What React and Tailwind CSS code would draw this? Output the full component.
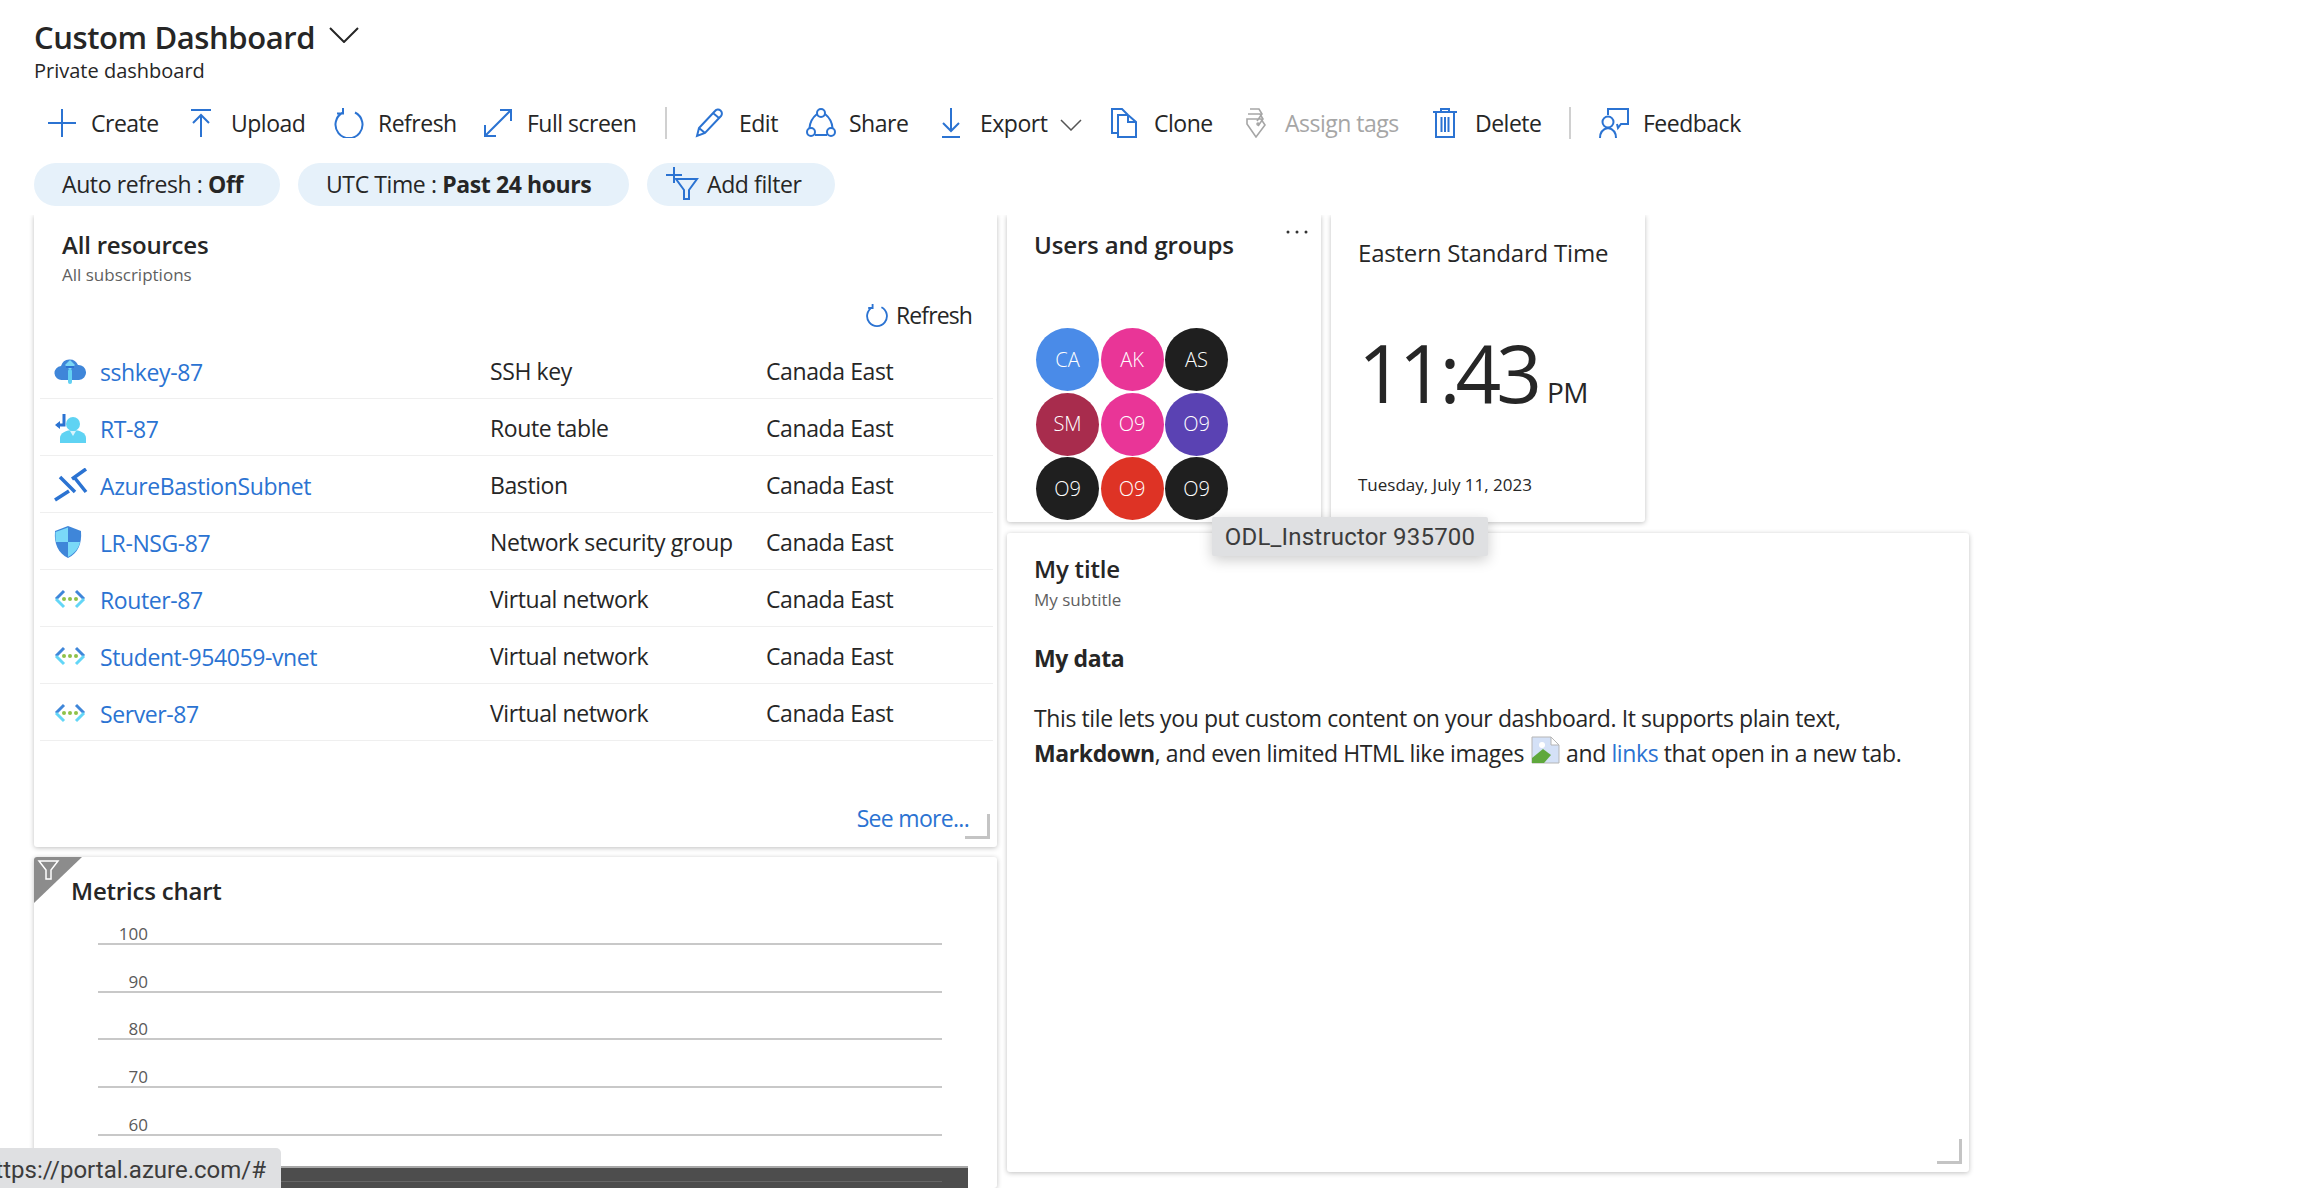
const Ic = ({ children, c = "#2b73d2", w = 30, h = 30, vb = "0 0 30 30", cls = "", sw = 2 }) => (
  <svg width={w} height={h} viewBox={vb} fill="none" stroke={c} strokeWidth={sw} className={`shrink-0 ${cls}`}>{children}</svg>
);

const tools = [
  { t: "Create", cls: "ml-[48px]", tw: "w-[67px]", ig: "w-[43px]", icon: <Ic w={28} h={28} vb="0 0 28 28"><path d="M14 0v28M0 14h28" /></Ic> },
  { t: "Upload", cls: "ml-[32px]", tw: "w-[73px]", ig: "w-[41px]", icon: <Ic w={22} h={30} vb="0 0 22 30"><path d="M1 2h20M11 29V7M3 15l8-8 8 8" /></Ic> },
  { t: "Refresh", cls: "ml-[30px]", tw: "w-[76px]", ig: "w-[44px]", icon: <Ic w={30} h={30}><path d="M9 4.500a13.500 13.500 0 1 0 12 0M9 0v5.500H3" /></Ic> },
  { t: "Full screen", cls: "ml-[29px]", tw: "w-[109px]", ig: "w-[44px]", icon: <Ic w={30} h={30}><path d="M2 28 28 2M17 2h11v11M2 17v11h11" /></Ic> },
  { sep: true, cls: "ml-[29px]" },
  { t: "Edit", cls: "ml-[28px]", tw: "w-[38px]", ig: "w-[44px]", icon: <Ic w={30} h={30}><path d="M2 28l2-8L20 3a3 3 0 0 1 6 5L10 25zM4 20l6 5M18 5l6 5" /></Ic> },
  { t: "Share", cls: "ml-[29px]", tw: "w-[58px]", ig: "w-[43px]", icon: <Ic w={30} h={30}><circle cx="15" cy="5" r="4" /><circle cx="5" cy="24" r="4" /><circle cx="25" cy="24" r="4" /><path d="M11 6C6 10 4 14 3.500 20M19 6c5 4 7 8 7.500 14M9 27h12" /></Ic> },
  { t: "Export", cls: "ml-[34px]", tw: "w-[65px]", ig: "w-[39px]", icon: <Ic w={20} h={30} vb="0 0 20 30"><path d="M10 0v23M2 15l8 8 8-8M1 29h18" /></Ic>, chev: true },
  { t: "Clone", cls: "ml-[66px]", tw: "w-[58px]", ig: "w-[43px]", icon: <Ic w={26} h={30} vb="0 0 26 30"><path d="M7 25H1V1h10l6 6M7 7h10l8 7v15H7zM17 7v7h8" /></Ic> },
  { t: "Assign tags", cls: "ml-[33px]", tw: "w-[117px]", ig: "w-[40px]", gray: true, icon: <Ic c="#a6a6a6" w={22} h={30} vb="0 0 22 30" sw={1.6}><path d="M5 1h9l3 5-5 7M3 6h12l3 5-5 7M2 11h14l4 6-9 12-9-13z" /><circle cx="13" cy="16" r="1" /></Ic> },
  { t: "Delete", cls: "ml-[31px]", tw: "w-[66px]", ig: "w-[42px]", icon: <Ic w={24} h={30} vb="0 0 24 30"><path d="M0 4h24M8 4V1h8v3M3 4v25h18V4M8.500 9v15M12 9v15M15.500 9v15" /></Ic> },
  { sep: true, cls: "ml-[28px]" },
  { t: "Feedback", cls: "ml-[28px]", tw: "w-[97px]", ig: "w-[44px]", icon: <Ic w={30} h={30}><path d="M9 7V1h20v15h-7l-3 4-1-4M1 30c0-6 3-9 8-10 5 1 8 4 8 10" /><circle cx="9" cy="14" r="5.500" /></Ic> },
];

const Cloud = () => (
  <svg width="32" height="29" viewBox="0 0 32 29" className="shrink-0">
    <path d="M8 23a7 7 0 0 1-1-14 9 9 0 0 1 17-1 7.500 7.500 0 0 1 1 15z" fill="#3f86d9" />
    <path d="M16 3l5 5-5 5-5-5z" fill="#7ad6f5" />
    <rect x="14" y="12" width="4" height="15" rx="2" fill="#63d0f2" />
    <rect x="12" y="9" width="8" height="2" fill="#2b73d2" />
  </svg>
);
const RouteT = () => (
  <svg width="32" height="31" viewBox="0 0 32 31" className="shrink-0">
    <circle cx="19" cy="11" r="7" fill="#5fd3f3" />
    <path d="M6 30v-5c0-5 6-8 13-8s13 3 13 8v5z" fill="#5fd3f3" />
    <path d="M16 18l3 5 3-5z" fill="#d8f4fc" />
    <path d="M10 1v11H3" stroke="#2b73d2" strokeWidth="3" fill="none" />
    <path d="M6 8l-5 4 5 4z" fill="#2b73d2" />
  </svg>
);
const Bastion = () => (
  <svg width="34" height="34" viewBox="0 0 34 34" className="shrink-0">
    <path d="M1 32l14-9M18 11L32 1M6 9l15 15M20 9l12 15" stroke="#2b73d2" strokeWidth="3.500" fill="none" />
  </svg>
);
const Shield = () => (
  <svg width="28" height="32" viewBox="0 0 28 32" className="shrink-0">
    <path d="M14 0l13 5c1 13-3 22-13 27C4 27 0 18 1 5z" fill="#3f86d9" />
    <path d="M14 1.500V16H2c-.5-4-.5-7-.5-10zM14 16h12c-1 6-5 11-12 15z" fill="#7ad9f8" />
  </svg>
);
const Vnet = () => (
  <svg width="32" height="20" viewBox="0 0 32 20" className="shrink-0">
    <path d="M10 2L2 10" stroke="#3f86d9" strokeWidth="3" fill="none" />
    <path d="M2 10l8 8" stroke="#63d6f7" strokeWidth="3" fill="none" />
    <path d="M22 2l8 8" stroke="#3f86d9" strokeWidth="3" fill="none" />
    <path d="M30 10l-8 8" stroke="#63d6f7" strokeWidth="3" fill="none" />
    <circle cx="10" cy="10" r="2" fill="#8fc24a" /><circle cx="16" cy="10" r="2" fill="#8fc24a" /><circle cx="22" cy="10" r="2" fill="#8fc24a" />
  </svg>
);

const rows = [
  ["sshkey-87", "SSH key", <Cloud />],
  ["RT-87", "Route table", <RouteT />],
  ["AzureBastionSubnet", "Bastion", <Bastion />],
  ["LR-NSG-87", "Network security group", <Shield />],
  ["Router-87", "Virtual network", <Vnet />],
  ["Student-954059-vnet", "Virtual network", <Vnet />],
  ["Server-87", "Virtual network", <Vnet />],
];

const people = [
  ["CA", "bg-[#4a8be8]"], ["AK", "bg-[#e93597]"], ["AS", "bg-[#1f1f1f]"],
  ["SM", "bg-[#a82c4d]"], ["O9", "bg-[#e93597]"], ["O9", "bg-[#5a42b3]"],
  ["O9", "bg-[#1f1f1f]"], ["O9", "bg-[#de3325]"], ["O9", "bg-[#1f1f1f]"],
];

const Resize = () => (
  <div className="absolute right-[7px] bottom-[8px] w-[25px] h-[25px] border-r-[3px] border-b-[3px] border-[#c4c4c4]" />
);

const card = "relative bg-white rounded-[3px] shadow-[0_1px_5px_rgba(0,0,0,0.25)]";

export default function App() {
  return (
    <div className="relative w-[2306px] h-[1188px] overflow-hidden bg-white text-[#262626] font-['Open_Sans',sans-serif]">
      <div className="h-[87px] pl-[34px] pt-[19px]">
        <div className="flex items-center h-[36px]">
          <span className="text-[31px] leading-[36px] font-semibold tracking-[-0.4px]">Custom Dashboard</span>
          <svg width="30" height="16" viewBox="0 0 30 16" fill="none" stroke="#262626" strokeWidth="2" className="ml-[14px] mb-[4px]"><path d="M1 1l14 14L29 1" /></svg>
        </div>
        <div className="mt-[3px] text-[20px] leading-[26px]">Private dashboard</div>
      </div>
      <div className="flex items-center h-[87px] pb-[15px] text-[23px] tracking-[-0.5px]">
        {tools.map((x, i) =>
          x.sep ? (
            <div key={i} className={`w-[2px] h-[32px] bg-[#d0d0d0] ${x.cls}`} />
          ) : (
            <div key={i} className={`flex items-center shrink-0 ${x.cls} ${x.gray ? "text-[#a6a6a6]" : ""}`}>
              <div className={`flex items-center ${x.ig}`}>{x.icon}</div>
              <span className={`${x.tw} whitespace-nowrap`}>{x.t}</span>
              {x.chev && <svg width="22" height="12" viewBox="0 0 22 12" fill="none" stroke="#555" strokeWidth="1.500" className="ml-[15px] -mr-[37px] mt-[4px]"><path d="M1 1l10 10L21 1" /></svg>}
            </div>
          )
        )}
      </div>
      <div className="flex items-center h-[51px] -mt-[15px] pl-[34px] gap-[18px] text-[23px] tracking-[-0.4px]">
        <div className="h-[43px] w-[246px] rounded-full bg-[#e6f1fa] flex items-center pl-[28px]">
          <span>Auto refresh : <b className="font-bold">Off</b></span>
        </div>
        <div className="h-[43px] w-[331px] rounded-full bg-[#e6f1fa] flex items-center pl-[28px]">
          <span>UTC Time : <b className="font-bold">Past 24 hours</b></span>
        </div>
        <div className="h-[43px] w-[188px] rounded-full bg-[#e6f1fa] flex items-center pl-[18px]">
          <svg width="34" height="34" viewBox="0 0 34 34" fill="none" stroke="#2b73d2" strokeWidth="2" className="mb-[2px]"><path d="M9 0v16M1 8h16M11 12h21l-8 11v9h-5v-9z" /></svg>
          <span className="ml-[8px]">Add filter</span>
        </div>
      </div>

      <div className="flex h-[973px] mt-[5px] overflow-hidden pl-[34px] gap-[10px]">
        <div className="w-[963px] flex flex-col gap-[10px] shrink-0">
          <div className={`${card} h-[632px] shrink-0 px-[28px] pt-[13px] rounded-t-none`}>
            <div className="text-[24px] leading-[34px] font-semibold tracking-[-0.2px]">All resources</div>
            <div className="mt-[2px] text-[17px] leading-[22px] text-[#5f5f5f]">All subscriptions</div>
            <div className="flex justify-end items-center mt-[14px] h-[30px] text-[23px] tracking-[-0.9px] -mr-[3px]">
              <svg width="22" height="24" viewBox="0 0 30 30" fill="none" stroke="#2b73d2" strokeWidth="2.500"><path d="M9 4.500a13.500 13.500 0 1 0 12 0M9 0v5.500H3" /></svg>
              <span className="ml-[8px]">Refresh</span>
            </div>
            <div className="-ml-[22px] -mr-[24px] mt-[11.500px] text-[23px] tracking-[-0.4px]">
              {rows.map((r, i) => (
                <div key={i} className="flex items-center h-[57px] border-b-[1.500px] border-[#efefef]">
                  <div className="w-[60px] pl-[14px] pt-[3px] shrink-0 flex items-center">{r[2]}</div>
                  <span className="w-[390px] shrink-0 text-[#2b73d2] pt-[6px]">{r[0]}</span>
                  <span className="w-[276px] shrink-0 pt-[3px]">{r[1]}</span>
                  <span className="pt-[3px]">Canada East</span>
                </div>
              ))}
            </div>
            <div className="flex justify-end mt-[60px] text-[23px] tracking-[-0.7px] text-[#2b73d2]">See more...</div>
            <Resize />
          </div>
          <div className={`${card} flex-1 overflow-hidden`}>
            <svg width="48" height="46" viewBox="0 0 48 46" className="absolute left-0 top-0">
              <path d="M0 0h48L0 46z" fill="#8c8c8c" />
              <path d="M5 4h19l-7 9v9h-5v-9z" fill="none" stroke="#fff" strokeWidth="1.500" />
            </svg>
            <div className="pl-[37px] pt-[17px] text-[24px] leading-[34px] font-semibold tracking-[-0.2px]">Metrics chart</div>
            <div className="ml-[64px] -mt-[11px] w-[844px] text-[17px] text-[#5a5a5a]">
              {["100", "90", "80", "70", "60"].map((n) => (
                <div key={n} className="h-[47.750px] border-b-2 border-[#c8c8c8] flex items-end justify-start">
                  <span className="w-[50px] text-right leading-[18px]">{n}</span>
                </div>
              ))}
            </div>
            <div className="mt-[30px] ml-[6px] mr-[29px] h-[30px] bg-[#4d4d4d] border-t-2 border-[#a8a8a8]">
              <div className="h-[14px] ml-[58px] mr-[26px] border-b border-[#666]" />
            </div>
          </div>
        </div>

        <div className="w-[962px] flex flex-col gap-[11px] shrink-0">
          <div className="flex gap-[10px] h-[307px] shrink-0">
            <div className={`${card} w-[314px] rounded-t-none pl-[27px] pt-[13px]`}>
              <div className="text-[24px] leading-[34px] font-semibold tracking-[-0.15px]">Users and groups</div>
              <svg width="24" height="4" viewBox="0 0 24 4" fill="#333" className="absolute right-[12px] top-[15px]">
                <circle cx="3" cy="2" r="1.500" /><circle cx="12" cy="2" r="1.500" /><circle cx="21" cy="2" r="1.500" />
              </svg>
              <div className="grid grid-cols-[repeat(3,63px)] gap-[1.500px] mt-[66px] ml-[2px]">
                {people.map((p, i) => (
                  <div key={i} className={`w-[63px] h-[63px] rounded-full flex items-center justify-center text-white text-[20px] font-light ${p[1]}`}>{p[0]}</div>
                ))}
              </div>
            </div>
            <div className={`${card} w-[314px] rounded-t-none pl-[27px] pt-[21px]`}>
              <div className="text-[24px] leading-[34px] tracking-[-0.2px]">Eastern Standard Time</div>
              <div className="flex items-baseline mt-[52px] h-[100px]">
                <span className="text-[80px] leading-[100px] tracking-[-5px] font-normal">11:43</span>
                <span className="text-[28px] ml-[10px] tracking-[-0.5px]">PM</span>
              </div>
              <div className="mt-[51px] text-[17px] leading-[24px]">Tuesday, July 11, 2023</div>
            </div>
          </div>
          <div className={`${card} h-[639px] shrink-0 pl-[27px] pt-[19px]`}>
            <div className="text-[24px] leading-[34px] font-semibold tracking-[-0.2px]">My title</div>
            <div className="mt-[2px] text-[17px] leading-[24px] text-[#5f5f5f]">My subtitle</div>
            <div className="mt-[29px] text-[23px] leading-[34px] font-bold tracking-[-0.4px]">My data</div>
            <div className="mt-[26px] text-[23px] leading-[34.500px] tracking-[-0.4px] whitespace-nowrap">
              <div>This tile lets you put custom content on your dashboard. It supports plain text,</div>
              <div>
                <b className="font-bold">Markdown</b>, and even limited HTML like images{" "}
                <svg width="29" height="28" viewBox="0 0 29 28" className="inline-block align-[-2px] mx-[1px]">
                  <path d="M1 1h19l8 8v18H1z" fill="#d4e1f7" stroke="#b5b5b5" />
                  <path d="M20 1v8h8z" fill="#fff" stroke="#b5b5b5" />
                  <path d="M1 27v-5l11-9 8 6-7 8z" fill="#5fa83c" />
                  <circle cx="11" cy="9" r="3" fill="#fff" />
                </svg>
                {" "}and <span className="text-[#2b73d2]">links</span> that open in a new tab.
              </div>
            </div>
            <Resize />
          </div>
        </div>
      </div>

      <div className="absolute left-[1212px] top-[517px] w-[276px] h-[39px] bg-[#dfe0e2] rounded-[2px] shadow-[0_4px_14px_rgba(0,0,0,0.2)] flex items-center justify-center text-[24px] tracking-[0.2px] text-[#3c3c3c] font-['Roboto',sans-serif]">ODL_Instructor 935700</div>
      <div className="absolute left-0 bottom-0 w-[281px] h-[40px] bg-[#dfe0e2] rounded-tr-[5px] overflow-hidden flex justify-end items-center pr-[15px] pt-[3px] text-[24px] text-[#3c3c3c] whitespace-nowrap font-['Roboto',sans-serif]">https://portal.azure.com/#</div>
    </div>
  );
}
